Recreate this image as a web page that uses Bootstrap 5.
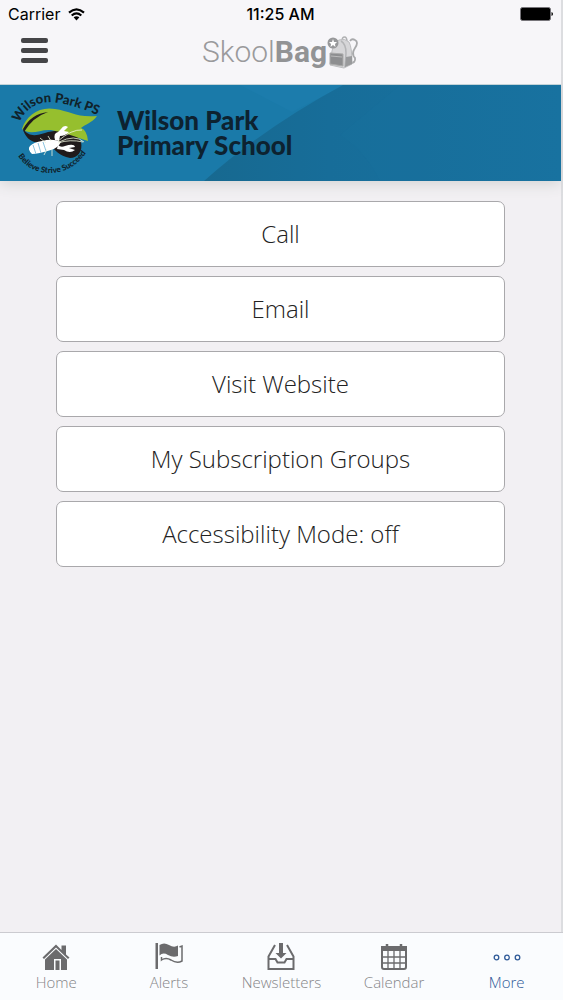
<!DOCTYPE html>
<html lang="en">
<head>
<meta charset="utf-8">
<meta name="viewport" content="width=device-width, initial-scale=1">
<title>SkoolBag</title>
<link rel="stylesheet" href="https://cdn.jsdelivr.net/npm/bootstrap@5.3.0/dist/css/bootstrap.min.css">
<style>
  body { font-family: "Open Sans", sans-serif; background: #f2f0f3; color: #222; }
  .app { border-right: 2px solid #dcdde0; }
  .top { background: #f7f6f9; border-bottom: 1px solid #c3d3d8; }
  .status { font: 500 16px/28px Inter, sans-serif; color: #000; padding: 0 8px; }
  .status > * { flex: 1 1 0; }
  .carrier { font-weight: 400; }
  .bar { height: 56px; padding: 0 20px 8px; }
  .bar > * { flex: 1 1 0; }
  .brand { font: 300 30px/40px Roboto, sans-serif; color: #9a9a9c; }
  .brand b { font-weight: 700; color: #929395; }
  .banner { height: 96px; background: #1a7aa9; box-shadow: 0 2px 14px #cfd0d0; }
  .facets { inset: 0; }
  .crest { margin-left: 4px; }
  .school { font: 900 26px/25px Lato, sans-serif; color: #0d2230; margin-left: 13px; }
  .actions { padding: 20px 56px; gap: 9px; }
  .action { --bs-btn-bg: #fff; --bs-btn-border-color: #a9a8ab; --bs-btn-color: #222; --bs-btn-hover-bg: #f8f8f8;
    height: 66px; border-radius: 7px; font-size: 24px; font-weight: 300; line-height: 32px; }
  .tabs { background: #fafcfe; border-top: 1px solid #cbcbd0; height: 68px; margin-right: -2px; }
  .tab { color: #858588; font-size: 15px; font-weight: 300; line-height: 20px; padding-top: 9px; }
  .tab svg { color: #6b6b6d; margin-bottom: 1px; }
  .tab.active, .tab.active svg { color: #2f5a98; }
</style>
</head>
<body>
<div class="app d-flex flex-column min-vh-100">
  <header class="top position-relative z-1">
    <div class="status d-flex align-items-center">
      <span class="carrier d-flex align-items-center">Carrier
        <svg class="ms-2" width="17" height="13" viewBox="0 0 17 13" fill="none" stroke="#000" stroke-width="2.2" aria-hidden="true"><path d="M1 4.6Q8.500-1.900 16 4.600M3.700 7.500Q8.500 3.300 13.300 7.500"/><path d="M5.600 9.300Q8.500 7 11.400 9.300L8.500 12.500Z" fill="#000" stroke="none"/></svg>
      </span>
      <span class="text-center">11:25 AM</span>
      <span class="d-flex justify-content-end"><svg width="33" height="14" viewBox="0 0 33 14" aria-label="Battery full"><rect x=".5" y=".5" width="30" height="13" rx="2" stroke="#77757a"/><path d="M31.500 5Q33 5.500 33 7T31.500 9Z"/></svg></span>
    </div>
    <nav class="bar d-flex align-items-center" aria-label="Main">
      <div class="d-flex"><button type="button" class="btn p-0 border-0 d-flex" aria-label="Menu">
        <svg width="28" height="28" viewBox="0 0 28 28" fill="#454548"><rect x="1" y="0" width="27" height="5" rx="2"/><rect x="1" y="10" width="27" height="5" rx="2"/><rect x="1" y="20" width="27" height="5" rx="2"/></svg>
      </button></div>
      <a href="#" class="brand d-flex justify-content-center align-items-center text-decoration-none"><span>Skool<b>Bag</b></span>
        <svg class="flex-shrink-0" width="32" height="34" viewBox="0 0 32 34" aria-hidden="true">
          <path d="M23 6Q25 3 28 5Q32 7 28 13Q24 19 28 23Q29 28 23 28" fill="none" stroke="#a8a9ab" stroke-width="1.800"/>
          <path d="M15 6Q15 2 17.500 2T20 7" fill="none" stroke="#b0b1b3" stroke-width="1.500"/>
          <path d="M12 5Q18 3 22 7Q25 12 25 29L17 33L3 30L5 16Q7 7 12 5Z" fill="#d6d6d8" stroke="#bcbdbf"/>
          <path d="M14 6Q19 9 19 18L18 32" fill="none" stroke="#b4b5b7" stroke-width="1.500"/>
          <path d="M19 22L25 21V29L18 32Z" fill="#999a9c"/>
          <path d="M3 18L16 19V31L3 29Z" fill="#8d8e90" stroke="#aaa"/>
          <path d="M4 21L15 22" stroke="#bbb"/>
          <circle cx="6" cy="8" r="5.500" fill="#97989a"/>
          <path d="M6 4L7 7L10 7L8 9L8.500 12L6 10L3.500 12L4 9L2 7L5 7Z" fill="#fff"/>
        </svg>
      </a>
      <div></div>
    </nav>
  </header>

  <section class="banner position-relative d-flex align-items-center">
    <svg class="facets position-absolute w-100 h-100" viewBox="0 0 561 96" preserveAspectRatio="none" aria-hidden="true">
      <defs><linearGradient id="deep" x2="1"><stop stop-color="#176990"/><stop offset=".35" stop-color="#176d99"/><stop offset="1" stop-color="#1872a0"/></linearGradient></defs>
      <path d="M240 0H345L292 27Z" fill="#1c7cac"/>
      <path d="M204 96Q265 42 343 0H561V96Z" fill="url(#deep)"/>
      <path d="M340 50Q365 66 380 96H561V0H400Z" fill="#1775a2" opacity=".2"/>
    </svg>
    <svg class="crest position-relative flex-shrink-0" width="100" height="96" viewBox="4 85 100 96" font-family="Lato, sans-serif" font-weight="900" fill="#10222b" role="img" aria-label="Wilson Park PS, Believe Strive Succeed">
      <defs>
        <path id="arcTop" d="M19 123Q29 102 51 102Q70 103 100 116"/>
        <path id="arcBottom" d="M18 156Q29 173 51 173Q74 172 88 150"/>
      </defs>
      <path d="M23 129C30 138 37 135 45 133C59 128 79 133 81 142C83 151 78 158 70 158C59 156 55 150 49 144C39 143 27 144 23 129Z" fill="#201b1c"/>
      <path d="M22 129C26 116 39 106 55 109C70 111 77 118 97 116C92 123 84 125 81 128Q87 130 88 141C76 137 63 132 51 130C40 129 31 136 22 129Z" fill="#96bf2e"/>
      <path d="M23 129Q31 114 48 112Q33 117 24 132Z" fill="#201b1c"/>
      <g fill="#fff">
        <path d="M30 146Q34 142 42 141Q53 138 61 142Q58 148 51 150Q38 154 32 154Q27 149 30 146Z"/>
        <path d="M55 140Q53 133 58 132L61 129Q64 124 68 127L64 131L69 132Q65 136 60 136L59 141Z"/>
        <path d="M58 145Q61 148 65 146Q74 143 75 147L69 148L75 150Q70 154 64 150L57 149Z"/>
      </g>
      <path d="M33 145L36 154M38 143L41 153M43 142L46 151" stroke="#8cc4df"/>
      <path d="M58 141Q72 129 82 130M59 142Q75 134 84 142M58 143Q70 139 83 142M46 143L40 138M51 141L48 136M47 149L44 155M52 149L52 156" fill="none" stroke="#edf4dc" stroke-width=".8"/>
      <text font-size="13"><textPath href="#arcTop">Wilson Park PS</textPath></text>
      <text font-size="8"><textPath href="#arcBottom">Believe Strive Succeed</textPath></text>
    </svg>
    <h1 class="school position-relative mb-0">Wilson Park<br>Primary School</h1>
  </section>

  <main class="actions d-flex flex-column flex-grow-1">
    <button type="button" class="btn action">Call</button>
    <button type="button" class="btn action">Email</button>
    <button type="button" class="btn action">Visit Website</button>
    <button type="button" class="btn action">My Subscription Groups</button>
    <button type="button" class="btn action">Accessibility Mode: off</button>
  </main>

  <nav class="tabs d-flex sticky-bottom" aria-label="Sections">
    <a href="#" class="tab col text-center text-decoration-none d-flex flex-column align-items-center">
      <svg width="30" height="29" viewBox="0 0 30 29" fill="currentColor"><path d="M1.500 15.500L15 2.500L20.500 8V3.500H25V12.500L28.500 15.500L27 17L15 5.500L3 17Z"/><path d="M15 7L26 17.500V28H20V17H13V28H4V17.500Z"/><rect x="14.500" y="18.500" width="4" height="9.500"/></svg>
      Home</a>
    <a href="#" class="tab col text-center text-decoration-none d-flex flex-column align-items-center">
      <svg width="30" height="29" viewBox="0 0 30 29" fill="currentColor"><path d="M1.500 1H4V27H1.500Z"/><path d="M5.500 3Q10 0 15 3T24 3.500V14Q19 16 14 13T5.500 13.500Z"/><path d="M25.500 5L28 4V19Q23 22 17 18Q12 15 7.500 18V15" fill="none" stroke="currentColor" stroke-width="1.500"/></svg>
      Alerts</a>
    <a href="#" class="tab col text-center text-decoration-none d-flex flex-column align-items-center">
      <svg width="30" height="29" viewBox="0 0 30 29" fill="none" stroke="currentColor" stroke-width="2"><path d="M9 3L2.500 14.500V27H27.500V14.500L21 3M3 17H9.500L11.500 20.500H18.500L20.500 17H27"/><path d="M13 1H17V11H20.500L15 16.500L9.500 11H13Z" fill="currentColor" stroke="none"/></svg>
      Newsletters</a>
    <a href="#" class="tab col text-center text-decoration-none d-flex flex-column align-items-center">
      <svg width="30" height="29" viewBox="0 0 30 29" fill="none" stroke="currentColor"><rect x="3" y="5" width="24" height="22" rx="2" stroke-width="2"/><path d="M2 4H28V9H2Z" fill="currentColor" stroke="none"/><path d="M8 2V6M22 2V6" stroke-width="2.500"/><path d="M9 9V27M15 9V27M21 9V27M3 15H27M3 21H27" stroke-width="1.300"/></svg>
      Calendar</a>
    <a href="#" class="tab active col text-center text-decoration-none d-flex flex-column align-items-center" aria-current="page">
      <svg width="30" height="29" viewBox="0 0 30 29" fill="none" stroke="currentColor" stroke-width="1.300"><circle cx="4.500" cy="15.500" r="2.300"/><circle cx="15" cy="15.500" r="2.300"/><circle cx="25.500" cy="15.500" r="2.300"/></svg>
      More</a>
  </nav>
</div>
<script src="https://cdn.jsdelivr.net/npm/bootstrap@5.3.0/dist/js/bootstrap.bundle.min.js"></script>
</body>
</html>
